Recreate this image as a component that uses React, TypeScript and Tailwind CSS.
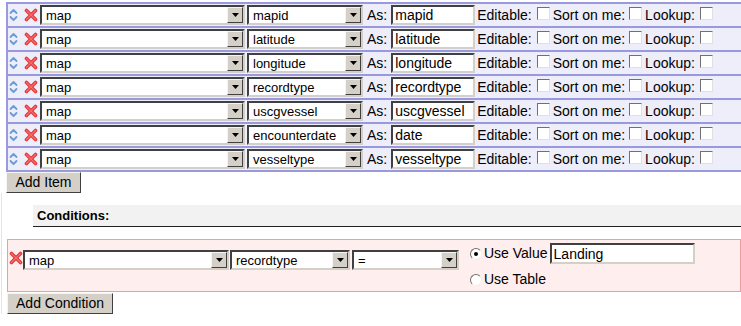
import React from "react";

const font = "font-['Liberation_Sans',Arial,sans-serif]";

function DropBtn() {
  return (
    <div className="flex h-[16px] w-[16px] items-center justify-center border border-t-[#f4f4f4] border-l-[#f4f4f4] border-r-[#404040] border-b-[#404040] bg-[#d4d0c8]">
      <svg width="7" height="4" viewBox="0 0 7 4">
        <polygon points="0,0 7,0 3.5,4" fill="#000" />
      </svg>
    </div>
  );
}

function Sel({ text, cls }: { text: string; cls: string }) {
  return (
    <div
      className={`flex h-[20px] shrink-0 items-center justify-between border-2 border-t-[#404040] border-l-[#404040] border-r-[#d4d0c8] border-b-[#d4d0c8] bg-white pl-[4px] ${cls}`}
    >
      <span className="text-[13px] leading-none text-black">{text}</span>
      <DropBtn />
    </div>
  );
}

function Inp({ text, cls }: { text: string; cls: string }) {
  return (
    <div
      className={`flex h-[20px] shrink-0 items-center border-2 border-t-[#404040] border-l-[#404040] border-r-[#d4d0c8] border-b-[#d4d0c8] bg-white pl-[2px] ${cls}`}
    >
      <span className="text-[14px] leading-none text-black">{text}</span>
    </div>
  );
}

function Check() {
  return (
    <span className="inline-block h-[13px] w-[13px] shrink-0 border border-t-[#707070] border-l-[#707070] border-r-[#e0e0e0] border-b-[#e0e0e0] bg-white" />
  );
}

function Radio({ on }: { on?: boolean }) {
  return (
    <span className="relative inline-flex h-[12px] w-[12px] shrink-0 items-center justify-center rounded-full border border-t-[#707070] border-l-[#707070] border-r-[#f0f0f0] border-b-[#f0f0f0] bg-white">
      {on && <span className="h-[4px] w-[4px] rounded-full bg-black" />}
    </span>
  );
}

function UpDown() {
  return (
    <svg width="9" height="14" viewBox="0 0 9 14">
      <polyline points="1.5,5 4.5,2 7.5,5" fill="none" stroke="#6a9ad8" strokeWidth="1.8" strokeLinecap="round" strokeLinejoin="round" />
      <polyline points="1.5,9 4.5,12 7.5,9" fill="none" stroke="#6a9ad8" strokeWidth="1.8" strokeLinecap="round" strokeLinejoin="round" />
    </svg>
  );
}

function RedX() {
  return (
    <svg width="14" height="14" viewBox="0 0 14 14">
      <line x1="2.5" y1="2.5" x2="11.5" y2="11.5" stroke="#e23a3a" strokeWidth="3.6" strokeLinecap="round" />
      <line x1="11.5" y1="2.5" x2="2.5" y2="11.5" stroke="#e23a3a" strokeWidth="3.6" strokeLinecap="round" />
      <line x1="2.5" y1="2.5" x2="11.5" y2="11.5" stroke="#f07070" strokeWidth="1.2" strokeLinecap="round" />
      <line x1="11.5" y1="2.5" x2="2.5" y2="11.5" stroke="#f07070" strokeWidth="1.2" strokeLinecap="round" />
    </svg>
  );
}

function Btn({ label, cls }: { label: string; cls: string }) {
  return (
    <div
      className={`flex h-[21px] items-center justify-center border border-t-[#f4f4f4] border-l-[#f4f4f4] border-r-[#404040] border-b-[#404040] bg-[#d4d0c8] text-[14px] text-black ${cls}`}
    >
      {label}
    </div>
  );
}

const rows: [string, string][] = [
  ["mapid", "mapid"],
  ["latitude", "latitude"],
  ["longitude", "longitude"],
  ["recordtype", "recordtype"],
  ["uscgvessel", "uscgvessel"],
  ["encounterdate", "date"],
  ["vesseltype", "vesseltype"],
];

export default function App() {
  return (
    <div className={`${font} h-[326px] w-[741px] overflow-hidden bg-white pt-[2px] text-[14px] text-black`}>
      <div className="pl-[6px]">
        <div className="border-l-2 border-[#9999e0]">
          {rows.map(([f, a], i) => (
            <div
              key={i}
              className={`flex h-[24px] items-center bg-[#eeeefa] border-b-2 border-[#9999e0] ${i === 0 ? "h-[26px] border-t-2" : ""}`}
            >
              <div className="ml-[1px] flex w-[9px] items-center">
                <UpDown />
              </div>
              <div className="ml-[6px] flex items-center">
                <RedX />
              </div>
              <Sel text="map" cls="ml-[2px] w-[205px]" />
              <Sel text={f} cls="ml-[2px] w-[116px]" />
              <span className="ml-[4px] text-[#000]">As:</span>
              <Inp text={a} cls="ml-[4px] w-[84px]" />
              <span className="ml-[2px]">Editable:</span>
              <span className="ml-[5px]"><Check /></span>
              <span className="ml-[3px]">Sort on me:</span>
              <span className="ml-[4px]"><Check /></span>
              <span className="ml-[3px]">Lookup:</span>
              <span className="ml-[5px]"><Check /></span>
            </div>
          ))}
        </div>
        <Btn label="Add Item" cls="w-[75px]" />
      </div>

      <div className="ml-[1px] border-l border-[#e4e4e4] pl-[5px] pt-[12px]">
        <div className="ml-[26px] flex h-[22px] items-center border-b border-[#222] bg-[#f2f2f2] pl-[4px] text-[13px] font-bold">
          Conditions:
        </div>
        <div className="mt-[12px] flex h-[53px] items-start border border-[#e8a0a0] bg-[#ffeeee]">
          <div className="ml-[1px] mt-[11px] flex items-center">
            <RedX />
          </div>
          <Sel text="map" cls="mt-[10px] w-[206px]" />
          <Sel text="recordtype" cls="ml-[1px] mt-[10px] w-[120px]" />
          <Sel text="=" cls="ml-[2px] mt-[10px] w-[107px]" />
          <div className="ml-[11px] mt-[3px] flex flex-col">
            <div className="flex items-center">
              <Radio on />
              <span className="ml-[2px]">Use Value</span>
              <Inp text="Landing" cls="ml-[2px] w-[145px] h-[21px]" />
            </div>
            <div className="mt-[5px] flex items-center">
              <Radio />
              <span className="ml-[2px]">Use Table</span>
            </div>
          </div>
        </div>
        <Btn label="Add Condition" cls="mt-[1px] w-[106px]" />
      </div>
    </div>
  );
}
